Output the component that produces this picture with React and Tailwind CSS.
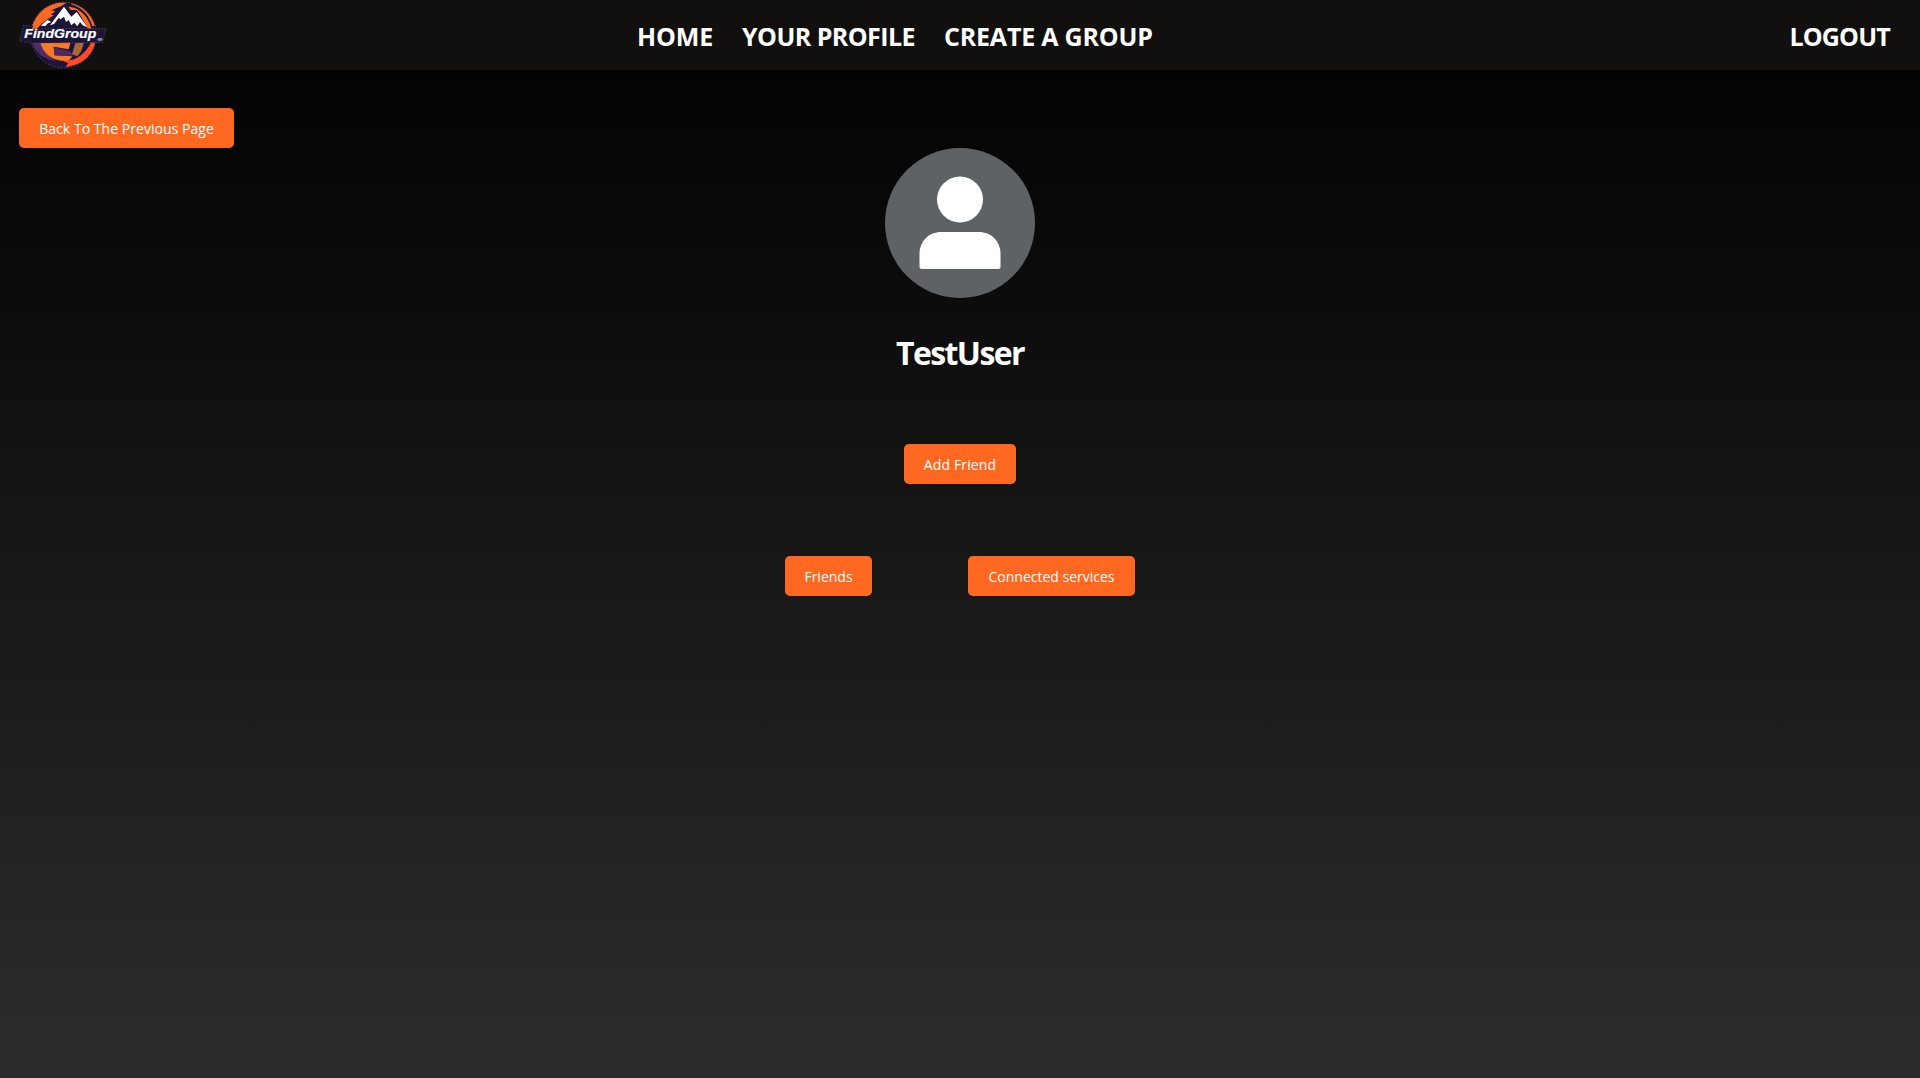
function Logo() {
  return (
    <svg className="ml-[19px] h-[70px] w-[88px] shrink-0" viewBox="57 0 264 210" role="img" aria-label="FindGroup">
      <defs>
        <clipPath id="badge">
          <circle cx="191" cy="105" r="98" />
        </clipPath>
      </defs>
      <circle cx="191" cy="105" r="99" fill="#1d1537" stroke="#8c8798" strokeWidth="1.5" strokeDasharray="5 5" />
      <g clipPath="url(#badge)">
        <path d="M93 90A98 98 0 0 1 200 8L184 18L154 31L166 34L152 44L162 45L145 56L124 72L106 92Z" fill="#fb6a20" />
        <path d="M205 20C235 22 258 42 270 72L274 86H264L240 44L230 30L212 30Z" fill="#fb6a20" />
        <path d="M214 9C249 16 275 42 285 78H277C266 42 244 22 214 13Z" fill="#fb6a20" />
        <path d="M122 77L142 60L154 66L144 70L136 78Z" fill="#fff" />
        <path d="M150 76L192 20L214 50L230 36L262 82L248 76L240 66L232 79L223 68L214 76L206 60L198 66L192 50L182 58L176 54L162 72Z" fill="#fff" />
        <path d="M97 127L126 128C130 151 148 174 172 184C135 181 103 157 97 127Z" fill="#512c68" />
        <path d="M121 129L212 126L206 148L161 140L164 166L218 169L205 183C170 186 132 169 121 129Z" fill="#fa7824" />
        <path d="M161 141L211 154L220 169L164 166Z" fill="#4c2863" />
        <path d="M226 130L252 128L243 155L232 169L216 163Z" fill="#a8683a" />
        <path d="M286 128C280 158 257 185 221 196L196 202L205 189L183 181C222 188 254 166 274 127Z" fill="#ff4927" />
      </g>
      <path d="M70 76L101 79L94 86H318L308 127L94 130L59 123Z" fill="#1d1537" stroke="#77728b" strokeWidth="1.5" strokeDasharray="4 5" />
      <text x="73" y="115" textLength="216" lengthAdjust="spacingAndGlyphs" fill="#fff" stroke="#fff" strokeWidth="0.6" className="font-['Liberation_Sans'] text-[40px] font-bold italic">FindGroup</text>
      <text x="290" y="119" fill="#d8d5df" className="font-['Liberation_Sans'] text-[11px] font-bold italic">.gg</text>
    </svg>
  );
}

function Button({ children, className }) {
  return (
    <button className={`h-10 shrink-0 whitespace-nowrap rounded-[5px] bg-[#ff6820] pt-0.5 text-center text-[14px] leading-5 text-white ${className}`}>
      {children}
    </button>
  );
}

export default function App() {
  return (
    <div className="flex h-screen flex-col overflow-hidden bg-linear-to-b/srgb from-black to-[#2c2c2c] font-['Open_Sans',sans-serif] text-white">
      <header className="flex h-[70px] shrink-0 items-center bg-[#11100e] text-[25px] font-bold leading-9">
        <Logo />
        <nav className="ml-[530px] flex whitespace-nowrap pt-0.5">
          <a className="w-[105px] tracking-[-0.1px]">HOME</a>
          <a className="w-[202px] tracking-[-0.55px]">YOUR PROFILE</a>
          <a className="w-[214px] tracking-[-0.2px]">CREATE A GROUP</a>
        </nav>
        <a className="ml-auto mr-[30px] pt-0.5 tracking-[-0.8px]">LOGOUT</a>
      </header>
      <main className="flex flex-col items-center">
        <Button className="ml-[19px] mt-[38px] w-[215px] self-start tracking-[0.04px]">Back To The Previous Page</Button>
        <svg className="size-[150px]" viewBox="0 0 150 150" aria-label="User avatar">
          <circle cx="75" cy="75" r="75" fill="#5f6264" />
          <circle cx="75" cy="51.5" r="23" fill="#fff" />
          <path d="M34.5 106C34.5 93 44 84 56 84H94C106 84 115.5 93 115.5 106V118.5Q115.5 121 113 121H37Q34.5 121 34.5 118.5Z" fill="#fff" />
        </svg>
        <h1 className="mt-[31px] h-12 text-[32px] font-bold leading-[48px] tracking-[-1.6px]">TestUser</h1>
        <Button className="mt-[67px] w-[112px] tracking-[0.15px]">Add Friend</Button>
        <div className="mt-[72px] flex gap-24">
          <Button className="w-[87px]">Friends</Button>
          <Button className="w-[167px]">Connected services</Button>
        </div>
      </main>
    </div>
  );
}
